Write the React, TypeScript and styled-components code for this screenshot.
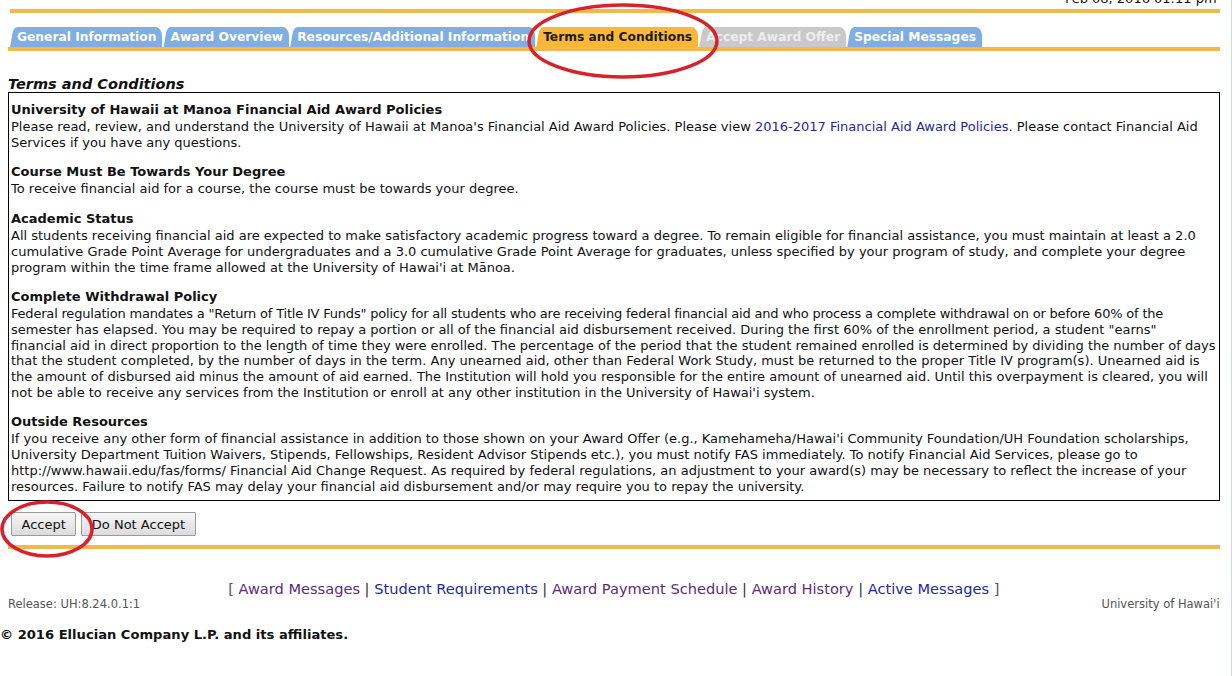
import React from "react";
import styled, { createGlobalStyle } from "styled-components";

const Global = createGlobalStyle`
  html, body { margin: 0; padding: 0; background: #fff; }
  body { font-family: "DejaVu Sans", Verdana, sans-serif; color: #000; overflow: hidden; }
`;

const Frame = styled.div`
  position: relative;
  display: flex;
  width: 1232px;
  height: 676px;
  overflow: hidden;
`;

const Main = styled.div`
  flex: 1;
  display: flex;
  flex-direction: column;
`;

const EdgeStrip = styled.div`
  width: 4px;
  background: #cbd9ec;
`;

const Inner = styled.div`
  display: flex;
  flex-direction: column;
  padding: 0 11px 0 8px;
`;

const DateLine = styled.div`
  text-align: right;
  font-size: 13px;
  line-height: 15px;
  margin-top: -9px;
  padding-right: 3px;
  color: #111;
`;

const OrangeRule = styled.div<{ $inset?: number; $top?: number }>`
  height: 4px;
  background: #f2b94a;
  margin-left: ${(p) => p.$inset ?? 0}px;
  margin-top: ${(p) => p.$top ?? 0}px;
`;

const TabRow = styled.div`
  display: flex;
  align-items: flex-end;
  gap: 1px;
  padding-left: 2px;
  margin-top: 14px;
`;

type TabKind = "blue" | "active" | "disabled";

const tabBg: Record<TabKind, string> = {
  blue: "#7eaee2",
  active: "#fbb836",
  disabled: "#c9c9c9",
};
const tabFg: Record<TabKind, string> = {
  blue: "#ffffff",
  active: "#1a1a1a",
  disabled: "#eeeeee",
};

const Tab = styled.div<{ $kind: TabKind }>`
  height: 20px;
  display: flex;
  align-items: center;
  padding: 0 6px 0 7px;
  font-size: 12.25px;
  font-weight: bold;
  white-space: nowrap;
  color: ${(p) => tabFg[p.$kind]};
  background: ${(p) => tabBg[p.$kind]};
  border-top-right-radius: 6px 9px;
  clip-path: polygon(0 100%, 1px 75%, 2px 45%, 3px 20%, 5px 5%, 7px 0, 100% 0, 100% 100%);
`;

const PageTitle = styled.div`
  font-size: 14.5px;
  font-weight: bold;
  font-style: italic;
  line-height: 17px;
  margin-top: 25px;
  margin-bottom: -1px;
  color: #111;
`;

const PolicyBox = styled.div`
  border: 1px solid #000;
  padding: 8px 3px 6px 2px;
  display: flex;
  flex-direction: column;
  gap: 13px;
`;

const Section = styled.div`
  display: flex;
  flex-direction: column;
`;

const SectionHead = styled.div`
  font-size: 13px;
  font-weight: bold;
  line-height: 17px;
  margin-bottom: 1px;
  color: #111;
`;

const Line = styled.div<{ $squeeze?: number }>`
  font-size: 13px;
  line-height: 15.7px;
  white-space: nowrap;
  color: #111;
  letter-spacing: ${(p) => (p.$squeeze ? `-${p.$squeeze}px` : "normal")};
`;

const InlineLink = styled.a`
  color: #1d2a9a;
  text-decoration: none;
`;

const ButtonRow = styled.div`
  display: flex;
  gap: 5px;
  margin-top: 11px;
  padding-left: 3px;
`;

const Btn = styled.button`
  height: 24px;
  padding: 0 9.5px;
  font-family: "DejaVu Sans", Verdana, sans-serif;
  font-size: 13px;
  color: #111;
  border: 1px solid #9a9a9a;
  border-radius: 1px;
  background: linear-gradient(#f6f6f6, #dcdcdc);
`;

const LinkBar = styled.div`
  margin-top: 31px;
  text-align: center;
  font-size: 14.6px;
  line-height: 17px;
  color: #333;
  white-space: nowrap;
`;

const FootLink = styled.a<{ $visited?: boolean }>`
  color: ${(p) => (p.$visited ? "#5f2a78" : "#1d2a9a")};
  text-decoration: none;
`;

const Bracket = styled.span`
  color: #555;
`;

const ReleaseRow = styled.div`
  display: flex;
  justify-content: space-between;
  font-size: 11.5px;
  line-height: 15px;
  color: #555;
`;

const Copyright = styled.div`
  margin-top: 15px;
  font-size: 13.1px;
  font-weight: bold;
  line-height: 16px;
  color: #111;
  white-space: nowrap;
`;

const Annotations = styled.svg`
  position: absolute;
  left: 0;
  top: 0;
  pointer-events: none;
`;

const tabs: { label: string; kind: TabKind }[] = [
  { label: "General Information", kind: "blue" },
  { label: "Award Overview", kind: "blue" },
  { label: "Resources/Additional Information", kind: "blue" },
  { label: "Terms and Conditions", kind: "active" },
  { label: "Accept Award Offer", kind: "disabled" },
  { label: "Special Messages", kind: "blue" },
];

type PolicyLine = { text: React.ReactNode; squeeze?: number };

const sections: { head: string; lines: PolicyLine[] }[] = [
  {
    head: "University of Hawaii at Manoa Financial Aid Award Policies",
    lines: [
      {
        text: (
          <>
            Please read, review, and understand the University of Hawaii at Manoa's Financial Aid Award Policies. Please view{" "}
            <InlineLink href="#">2016-2017 Financial Aid Award Policies</InlineLink>. Please contact Financial Aid
          </>
        ),
      },
      { text: "Services if you have any questions." },
    ],
  },
  {
    head: "Course Must Be Towards Your Degree",
    lines: [{ text: "To receive financial aid for a course, the course must be towards your degree." }],
  },
  {
    head: "Academic Status",
    lines: [
      { text: "All students receiving financial aid are expected to make satisfactory academic progress toward a degree. To remain eligible for financial assistance, you must maintain at least a 2.0" },
      { text: "cumulative Grade Point Average for undergraduates and a 3.0 cumulative Grade Point Average for graduates, unless specified by your program of study, and complete your degree" },
      { text: "program within the time frame allowed at the University of Hawai'i at Mānoa." },
    ],
  },
  {
    head: "Complete Withdrawal Policy",
    lines: [
      {
        text: 'Federal regulation mandates a "Return of Title IV Funds" policy for all students who are receiving federal financial aid and who process a complete withdrawal on or before 60% of the',
        squeeze: 0.2,
      },
      { text: 'semester has elapsed. You may be required to repay a portion or all of the financial aid disbursement received. During the first 60% of the enrollment period, a student "earns"' },
      { text: "financial aid in direct proportion to the length of time they were enrolled. The percentage of the period that the student remained enrolled is determined by dividing the number of days" },
      { text: "that the student completed, by the number of days in the term. Any unearned aid, other than Federal Work Study, must be returned to the proper Title IV program(s). Unearned aid is" },
      { text: "the amount of disbursed aid minus the amount of aid earned. The Institution will hold you responsible for the entire amount of unearned aid. Until this overpayment is cleared, you will" },
      { text: "not be able to receive any services from the Institution or enroll at any other institution in the University of Hawai'i system." },
    ],
  },
  {
    head: "Outside Resources",
    lines: [
      { text: "If you receive any other form of financial assistance in addition to those shown on your Award Offer (e.g., Kamehameha/Hawai'i Community Foundation/UH Foundation scholarships," },
      { text: "University Department Tuition Waivers, Stipends, Fellowships, Resident Advisor Stipends etc.), you must notify FAS immediately. To notify Financial Aid Services, please go to" },
      { text: "http://www.hawaii.edu/fas/forms/ Financial Aid Change Request. As required by federal regulations, an adjustment to your award(s) may be necessary to reflect the increase of your" },
      { text: "resources. Failure to notify FAS may delay your financial aid disbursement and/or may require you to repay the university." },
    ],
  },
];

const footerLinks: { label: string; visited: boolean }[] = [
  { label: "Award Messages", visited: true },
  { label: "Student Requirements", visited: false },
  { label: "Award Payment Schedule", visited: true },
  { label: "Award History", visited: true },
  { label: "Active Messages", visited: false },
];

export default function App() {
  return (
    <>
      <Global />
      <Frame>
        <Main>
          <Inner>
            <DateLine>Feb 08, 2016 01:11 pm</DateLine>
            <OrangeRule $inset={2} $top={3} />
            <TabRow>
              {tabs.map((t) => (
                <Tab key={t.label} $kind={t.kind}>
                  {t.label}
                </Tab>
              ))}
            </TabRow>
            <OrangeRule />
            <PageTitle>Terms and Conditions</PageTitle>
            <PolicyBox>
              {sections.map((s) => (
                <Section key={s.head}>
                  <SectionHead>{s.head}</SectionHead>
                  {s.lines.map((l, i) => (
                    <Line key={i} $squeeze={l.squeeze}>
                      {l.text}
                    </Line>
                  ))}
                </Section>
              ))}
            </PolicyBox>
            <ButtonRow>
              <Btn>Accept</Btn>
              <Btn>Do Not Accept</Btn>
            </ButtonRow>
            <OrangeRule $top={9} />
            <LinkBar>
              <Bracket>[ </Bracket>
              {footerLinks.map((f, i) => (
                <React.Fragment key={f.label}>
                  {i > 0 && " | "}
                  <FootLink href="#" $visited={f.visited}>
                    {f.label}
                  </FootLink>
                </React.Fragment>
              ))}
              <Bracket> ]</Bracket>
            </LinkBar>
            <ReleaseRow>
              <span>Release: UH:8.24.0.1:1</span>
              <span>University of Hawai'i</span>
            </ReleaseRow>
          </Inner>
          <Copyright>© 2016 Ellucian Company L.P. and its affiliates.</Copyright>
        </Main>
        <EdgeStrip />
        <Annotations width={1232} height={676} viewBox="0 0 1232 676">
          <ellipse cx={623} cy={41} rx={94} ry={36} fill="none" stroke="#d8222b" strokeWidth={3.5} />
          <ellipse cx={47} cy={529} rx={45} ry={27} fill="none" stroke="#d8222b" strokeWidth={3.5} />
        </Annotations>
      </Frame>
    </>
  );
}
